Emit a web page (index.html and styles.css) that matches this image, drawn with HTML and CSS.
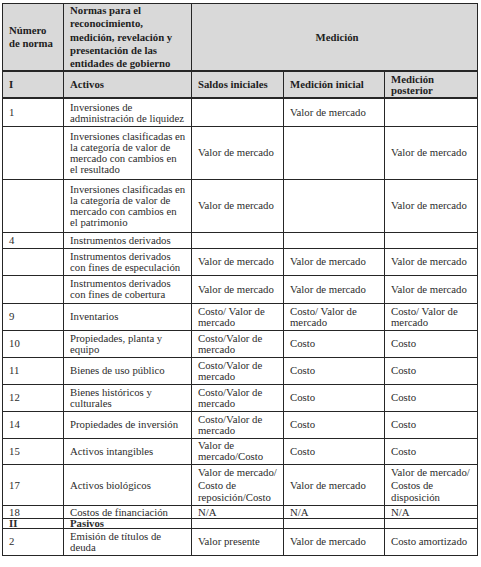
FILE: index.html
```html
<!DOCTYPE html>
<html lang="es">
<head>
<meta charset="utf-8">
<title>Normas</title>
<link rel="stylesheet" href="styles.css">
</head>
<body>
<table class="grid">
  <colgroup>
    <col class="c1"><col class="c2"><col class="c3"><col class="c4"><col class="c5">
  </colgroup>
  <tr class="h-top">
    <th class="tall">Número<br>de norma</th>
    <th class="tall">Normas para el<br>reconocimiento,<br>medición, revelación y<br>presentación de las<br>entidades de gobierno</th>
    <th class="center" colspan="3">Medición</th>
  </tr>
  <tr class="h-sub">
    <th>I</th>
    <th>Activos</th>
    <th>Saldos iniciales</th>
    <th>Medición inicial</th>
    <th>Medición<br>posterior</th>
  </tr>
  <tr class="r28">
    <td>1</td><td>Inversiones de<br>administración de liquidez</td><td></td><td>Valor de mercado</td><td></td>
  </tr>
  <tr class="r53">
    <td></td><td class="lift">Inversiones clasificadas en<br>la categoría de valor de<br>mercado con cambios en<br>el resultado</td><td>Valor de mercado</td><td></td><td>Valor de mercado</td>
  </tr>
  <tr class="r53">
    <td></td><td class="lift">Inversiones clasificadas en<br>la categoría de valor de<br>mercado con cambios en<br>el patrimonio</td><td>Valor de mercado</td><td></td><td>Valor de mercado</td>
  </tr>
  <tr class="r16">
    <td>4</td><td>Instrumentos derivados</td><td></td><td></td><td></td>
  </tr>
  <tr class="r27">
    <td></td><td>Instrumentos derivados<br>con fines de especulación</td><td>Valor de mercado</td><td>Valor de mercado</td><td>Valor de mercado</td>
  </tr>
  <tr class="r28">
    <td></td><td>Instrumentos derivados<br>con fines de cobertura</td><td>Valor de mercado</td><td>Valor de mercado</td><td>Valor de mercado</td>
  </tr>
  <tr class="r27">
    <td>9</td><td>Inventarios</td><td>Costo/ Valor de<br>mercado</td><td>Costo/ Valor de<br>mercado</td><td>Costo/ Valor de<br>mercado</td>
  </tr>
  <tr class="r27">
    <td>10</td><td>Propiedades, planta y<br>equipo</td><td>Costo/Valor de<br>mercado</td><td>Costo</td><td>Costo</td>
  </tr>
  <tr class="r27">
    <td>11</td><td>Bienes de uso público</td><td>Costo/Valor de<br>mercado</td><td>Costo</td><td>Costo</td>
  </tr>
  <tr class="r27">
    <td>12</td><td>Bienes históricos y<br>culturales</td><td>Costo/Valor de<br>mercado</td><td>Costo</td><td>Costo</td>
  </tr>
  <tr class="r27">
    <td>14</td><td>Propiedades de inversión</td><td>Costo/Valor de<br>mercado</td><td>Costo</td><td>Costo</td>
  </tr>
  <tr class="r26">
    <td>15</td><td>Activos intangibles</td><td>Valor de<br>mercado/Costo</td><td>Costo</td><td>Costo</td>
  </tr>
  <tr class="r41">
    <td>17</td><td>Activos biológicos</td><td>Valor de mercado/<br>Costo de<br>reposición/Costo</td><td>Valor de mercado</td><td>Valor de mercado/<br>Costos de<br>disposición</td>
  </tr>
  <tr class="r13">
    <td>18</td><td>Costos de financiación</td><td>N/A</td><td>N/A</td><td>N/A</td>
  </tr>
  <tr class="r9">
    <td class="b">II</td><td class="b">Pasivos</td><td></td><td></td><td></td>
  </tr>
  <tr class="r27">
    <td>2</td><td>Emisión de títulos de<br>deuda</td><td>Valor presente</td><td>Valor de mercado</td><td>Costo amortizado</td>
  </tr>
</table>
</body>
</html>
```

FILE: styles.css
```css
html, body {
  margin: 0;
  padding: 0;
  background: #ffffff;
}
body {
  padding: 3px 0 0 2px;
  font-family: "Liberation Serif", "Times New Roman", serif;
  font-size: 10.75px;
  color: #2c2c2c;
}
.grid {
  border-collapse: collapse;
  table-layout: fixed;
  width: 475px;
}
.c1 { width: 61px; }
.c2 { width: 128px; }
.c3 { width: 92px; }
.c4 { width: 101px; }
.c5 { width: 93px; }
.grid td, .grid th {
  border: 1px solid #262626;
  padding: 0 1px 0 6px;
  line-height: 11px;
  text-align: left;
  vertical-align: middle;
  white-space: nowrap;
}
.grid th {
  font-weight: bold;
  background: #d9d9d9;
  color: #1e1e1e;
}
.grid th.center { text-align: center; }
.grid th.tall { line-height: 13.3px; }
.h-top { height: 67px; }
.h-sub { height: 27px; }
.h-sub th { border-top-width: 2px; border-bottom-width: 2px; }
.r9 { height: 9px; }
.r13 { height: 13px; }
.r16 { height: 16px; }
.r26 { height: 26px; }
.r27 { height: 27px; }
.r28 { height: 28px; }
.r41 { height: 41px; }
.r53 { height: 53px; }
.r9 td { line-height: 9px; }
.r13 td { line-height: 12px; }
.r41 td { line-height: 12.5px; }
.lift { padding-bottom: 6px; }
.b { font-weight: bold; }
```
